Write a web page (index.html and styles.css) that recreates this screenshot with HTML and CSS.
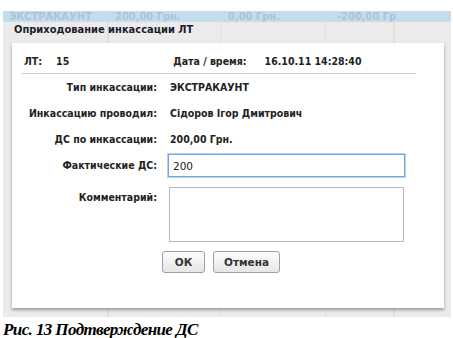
FILE: index.html
```html
<!DOCTYPE html>
<html>
<head>
  <title>Оприходование инкассации ЛТ</title>
  <link rel="stylesheet" href="styles.css">
</head>
<body>
  <div class="shot">
    <div class="gridrow">
      <span class="cell c1">ЭКСТРАКАУНТ</span>
      <span class="cell c2">200,00 Грн.</span>
      <span class="cell c3">0,00 Грн.</span>
      <span class="cell c4">-200,00 Гр</span>
    </div>
    <div class="window">
      <div class="wtitle">Оприходование инкассации ЛТ</div>
      <div class="panel">
        <div class="head">
          <span class="hlabel">ЛТ:</span>
          <span class="hval">15</span>
          <span class="hlabel dt">Дата / время:</span>
          <span class="hval date">16.10.11 14:28:40</span>
        </div>
        <div class="form">
          <div class="label">Тип инкассации:</div>
          <div class="value">ЭКСТРАКАУНТ</div>

          <div class="label">Инкассацию проводил:</div>
          <div class="value">Сідоров Ігор Дмитрович</div>

          <div class="label">ДС по инкассации:</div>
          <div class="value">200,00 Грн.</div>

          <div class="label">Фактические ДС:</div>
          <div class="value"><input class="field" type="text" value="200"></div>

          <div class="label top">Комментарий:</div>
          <div class="value"><textarea class="memo"></textarea></div>
        </div>
        <div class="buttons">
          <button class="btn ok">ОК</button>
          <button class="btn">Отмена</button>
        </div>
      </div>
    </div>
  </div>
  <div class="caption">Рис. 13 Подтверждение ДС</div>
</body>
</html>
```

FILE: styles.css
```css
body {
  margin: 0;
  background: #fff;
  font-family: "DejaVu Sans Condensed", "DejaVu Sans", Verdana, sans-serif;
  color: #222;
}
.shot {
  margin: 11px 2px 0 3px;
  width: 448px;
}
.gridrow {
  height: 11px;
  background: #c3dcee;
  display: flex;
  font-size: 11px;
  font-weight: bold;
  line-height: 11px;
  white-space: nowrap;
  color: #adc4d6;
}
.cell {
  display: block;
}
.c1 { width: 106px; padding-left: 6px; }
.c2 { width: 113px; }
.c3 { width: 109px; }
.c4 { width: 100px; }
.window {
  background:
    linear-gradient(90deg, transparent 104px, #dedede 104px, #dedede 106px, transparent 106px,
      transparent 217px, #e0e0e0 217px, #e0e0e0 218px, transparent 218px,
      transparent 322px, #e0e0e0 322px, #e0e0e0 323px, transparent 323px,
      transparent 390px, #dedede 390px, #dedede 392px, transparent 392px),
    #ebebeb;
  padding: 0 7px 9px 9px;
}
.wtitle {
  font-size: 11px;
  font-weight: bold;
  color: #1c1c2c;
  padding: 1px 0 0 2px;
  height: 20px;
  line-height: 13px;
}
.panel {
  background: #fff;
  box-shadow: 0 2px 3px rgba(0, 0, 0, 0.35);
  padding: 12px 28px 35px 10px;
  font-size: 10.5px;
  font-weight: bold;
  white-space: nowrap;
}
.head {
  display: flex;
  border-bottom: 1px solid #c8c8c8;
  padding: 0 0 5px 2px;
  line-height: 13px;
}
.hval {
  margin-left: 14px;
}
.hval.date {
  margin-left: 18px;
}
.dt {
  margin-left: 104px;
}
.form {
  display: grid;
  grid-template-columns: 135px 1fr;
  column-gap: 13px;
  row-gap: 13px;
  margin-top: 7px;
  align-items: center;
  line-height: 13px;
}
.label {
  text-align: right;
}
.label.top {
  align-self: start;
  padding-top: 6px;
}
.field {
  display: block;
  box-sizing: border-box;
  width: 237px;
  height: 23px;
  margin: -5px 0 -5px -2px;
  border: 1px solid #74a8d6;
  box-shadow: 0 0 0 1px #b6d4ef;
  font-family: "DejaVu Sans", Verdana, sans-serif;
  font-size: 10.5px;
  color: #222;
  padding: 0 4px;
  outline: none;
}
.memo {
  display: block;
  box-sizing: border-box;
  width: 235px;
  height: 55px;
  margin: 2px 0 0 -1px;
  border: 1px solid #b8b8b8;
  resize: none;
  outline: none;
}
.buttons {
  display: flex;
  gap: 8px;
  margin-top: 9px;
  padding-left: 140px;
}
.btn {
  font-family: "DejaVu Sans", Verdana, sans-serif;
  font-size: 10.5px;
  font-weight: bold;
  color: #333;
  height: 22px;
  padding: 0 10px;
  border: 1px solid #a0a0a0;
  border-radius: 3px;
  background: linear-gradient(#fdfdfd, #e6e6e6);
}
.btn.ok {
  width: 43px;
}
.caption {
  margin: 4px 0 0 3px;
  font-family: "Liberation Serif", "Times New Roman", serif;
  font-style: italic;
  font-weight: bold;
  font-size: 17px;
  letter-spacing: -0.6px;
  color: #000;
  line-height: 18px;
}
```
